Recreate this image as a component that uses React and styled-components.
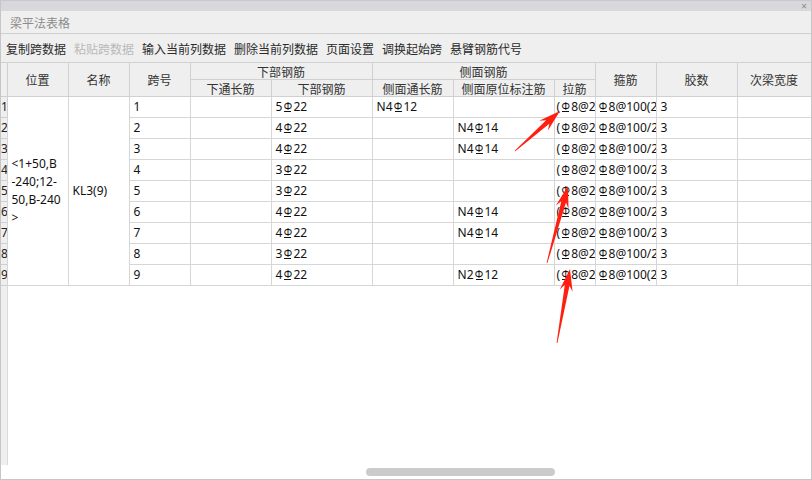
import React from "react";
import styled, { createGlobalStyle } from "styled-components";

const Global = createGlobalStyle`
  html, body { margin: 0; padding: 0; background: #fff; }
  body { font-family: "Noto Sans", "Noto Sans CJK SC", sans-serif; }
  * { box-sizing: border-box; }
`;

const Window = styled.div`
  position: relative;
  width: 812px;
  height: 480px;
  display: flex;
  flex-direction: column;
  border: 1px solid #c6c6c6;
  border-top: none;
  background: #efefef;
  overflow: hidden;
  font-size: 12px;
`;

const TopStrip = styled.div`
  height: 11px;
  flex: none;
  background: #d7d7dc;
  border-top: 1px solid #c8c8cd;
  display: flex;
  justify-content: flex-end;
  align-items: center;
  padding-right: 4px;
`;

const Close = styled.span`
  font-size: 10px;
  line-height: 10px;
  color: #8a8a8a;
`;

const TitleBar = styled.div`
  height: 23px;
  flex: none;
  display: flex;
  align-items: center;
  padding-left: 9px;
  color: #8c8c8c;
  font-family: "Noto Sans CJK SC", sans-serif;
  font-size: 12px;
  border-bottom: 1px solid #cfcfcf;
`;

const Toolbar = styled.div`
  height: 28px;
  flex: none;
  display: flex;
  align-items: center;
  gap: 8px;
  padding-left: 5px;
`;

const ToolButton = styled.span`
  font-family: "Noto Sans CJK SC", sans-serif;
  font-size: 12px;
  color: ${(p) => (p.$disabled ? "#b9b9b9" : "#2a2a2a")};
  white-space: nowrap;
`;

const GridArea = styled.div`
  flex: 1;
  overflow: hidden;
  background: linear-gradient(to right, #efefef 0 6px, #dadada 6px 7px, #fff 7px);
`;

const Table = styled.table`
  border-collapse: collapse;
  table-layout: fixed;
  width: ${(p) => p.$width}px;
  font-size: 12px;
`;

const HeadCell = styled.th`
  height: ${(p) => (p.$tall ? 34 : 17)}px;
  padding: 0;
  background: #efefef;
  border: 1px solid #d0d0d0;
  font-weight: normal;
  font-family: "Noto Sans CJK SC", sans-serif;
  color: #333;
  text-align: center;
  white-space: nowrap;
  overflow: hidden;
  line-height: 15px;
`;

const RowNum = styled.td`
  height: 21px;
  padding: 0;
  background: #efefef;
  border: 1px solid #d0d0d0;
  border-left: none;
  color: #222;
  font-size: 12px;
  overflow: hidden;
  white-space: nowrap;
  line-height: 20px;
`;

const Cell = styled.td`
  height: 21px;
  padding: 0 0 0 ${(p) => p.$pad ?? 4}px;
  background: #fff;
  border: 1px solid #d6d6d6;
  color: #111;
  white-space: nowrap;
  overflow: hidden;
  vertical-align: middle;
  line-height: 20px;
`;

const MergedCell = styled(Cell)`
  white-space: normal;
  line-height: 18px;
`;

const Sym = styled.span`
  position: relative;
  display: inline-block;
  width: 11px;
  height: 12px;
  vertical-align: 1px;
  text-align: center;
  font-size: 10px;
  line-height: 9px;
  &::after {
    content: "";
    position: absolute;
    left: 2px;
    right: 2px;
    bottom: 2px;
    height: 1px;
    background: currentColor;
  }
`;

const ScrollRow = styled.div`
  height: 14px;
  flex: none;
  background: #fff;
  display: flex;
  align-items: center;
  padding-left: 365px;
`;

const Thumb = styled.div`
  width: 189px;
  height: 8px;
  border-radius: 4px;
  background: #cbcbcb;
`;

const Overlay = styled.svg`
  position: absolute;
  left: 0;
  top: 0;
  pointer-events: none;
`;

const S = () => <Sym>Φ</Sym>;

const rebar = (pre, post) => (
  <>
    {pre}
    <S />
    {post}
  </>
);

const bottom = [5, 4, 4, 3, 3, 4, 4, 3, 4];
const side = { 2: "N4|14", 3: "N4|14", 6: "N4|14", 7: "N4|14", 9: "N2|12" };

const cols = [6, 61, 61, 61, 81, 101, 81, 101, 41, 61, 81, 74];
const tableWidth = cols.reduce((a, b) => a + b, 0);

function arrow(tx, ty, hx, hy) {
  const dx = hx - tx;
  const dy = hy - ty;
  const len = Math.hypot(dx, dy);
  const ux = dx / len;
  const uy = dy / len;
  const nx = -uy;
  const ny = ux;
  const L = 22;
  const pt = (d, w) => [hx - ux * d + nx * w, hy - uy * d + ny * w];
  const pts = [
    [tx + nx * 0.4, ty + ny * 0.4],
    pt(L * 0.75, 2.4),
    pt(L, 6.5),
    [hx, hy],
    pt(L, -6.5),
    pt(L * 0.75, -2.4),
    [tx - nx * 0.4, ty - ny * 0.4],
  ];
  return pts.map((p) => p.map((v) => v.toFixed(1)).join(",")).join(" ");
}

export default function App() {
  const rows = Array.from({ length: 9 }, (_, i) => i + 1);
  return (
    <>
      <Global />
      <Window>
        <TopStrip>
          <Close>×</Close>
        </TopStrip>
        <TitleBar>梁平法表格</TitleBar>
        <Toolbar>
          <ToolButton>复制跨数据</ToolButton>
          <ToolButton $disabled>粘贴跨数据</ToolButton>
          <ToolButton>输入当前列数据</ToolButton>
          <ToolButton>删除当前列数据</ToolButton>
          <ToolButton>页面设置</ToolButton>
          <ToolButton>调换起始跨</ToolButton>
          <ToolButton>悬臂钢筋代号</ToolButton>
        </Toolbar>
        <GridArea>
          <Table $width={tableWidth}>
            <colgroup>
              {cols.map((w, i) => (
                <col key={i} style={{ width: w }} />
              ))}
            </colgroup>
            <thead>
              <tr>
                <HeadCell rowSpan={2} $tall style={{ borderLeft: "none" }} />
                <HeadCell rowSpan={2} $tall>位置</HeadCell>
                <HeadCell rowSpan={2} $tall>名称</HeadCell>
                <HeadCell rowSpan={2} $tall>跨号</HeadCell>
                <HeadCell colSpan={2}>下部钢筋</HeadCell>
                <HeadCell colSpan={3}>侧面钢筋</HeadCell>
                <HeadCell rowSpan={2} $tall>箍筋</HeadCell>
                <HeadCell rowSpan={2} $tall>胶数</HeadCell>
                <HeadCell rowSpan={2} $tall>次梁宽度</HeadCell>
              </tr>
              <tr>
                <HeadCell>下通长筋</HeadCell>
                <HeadCell>下部钢筋</HeadCell>
                <HeadCell>侧面通长筋</HeadCell>
                <HeadCell>侧面原位标注筋</HeadCell>
                <HeadCell>拉筋</HeadCell>
              </tr>
            </thead>
            <tbody>
              {rows.map((r) => {
                const s = side[r] ? side[r].split("|") : null;
                return (
                  <tr key={r}>
                    <RowNum>{r}</RowNum>
                    {r === 1 && (
                      <>
                        <MergedCell rowSpan={9}>
                          &lt;1+50,B
                          <br />
                          -240;12-
                          <br />
                          50,B-240
                          <br />
                          &gt;
                        </MergedCell>
                        <Cell rowSpan={9}>KL3(9)</Cell>
                      </>
                    )}
                    <Cell>{r}</Cell>
                    <Cell />
                    <Cell>{rebar(bottom[r - 1], "22")}</Cell>
                    <Cell>{r === 1 ? rebar("N4", "12") : null}</Cell>
                    <Cell>{s ? rebar(s[0], s[1]) : null}</Cell>
                    <Cell $pad={2}>{rebar("(", "8@200)")}</Cell>
                    <Cell $pad={2}>
                      {rebar("", r === 1 || r === 9 ? "8@100(2)" : "8@100/200(2)")}
                    </Cell>
                    <Cell>3</Cell>
                    <Cell />
                  </tr>
                );
              })}
            </tbody>
          </Table>
        </GridArea>
        <ScrollRow>
          <Thumb />
        </ScrollRow>
        <Overlay width="812" height="480" viewBox="0 0 812 480">
          <polygon points={arrow(514, 151, 559, 111)} fill="#ff1f10" />
          <polygon points={arrow(546, 263, 567, 186)} fill="#ff1f10" />
          <polygon points={arrow(556, 343, 569, 269)} fill="#ff1f10" />
        </Overlay>
      </Window>
    </>
  );
}
